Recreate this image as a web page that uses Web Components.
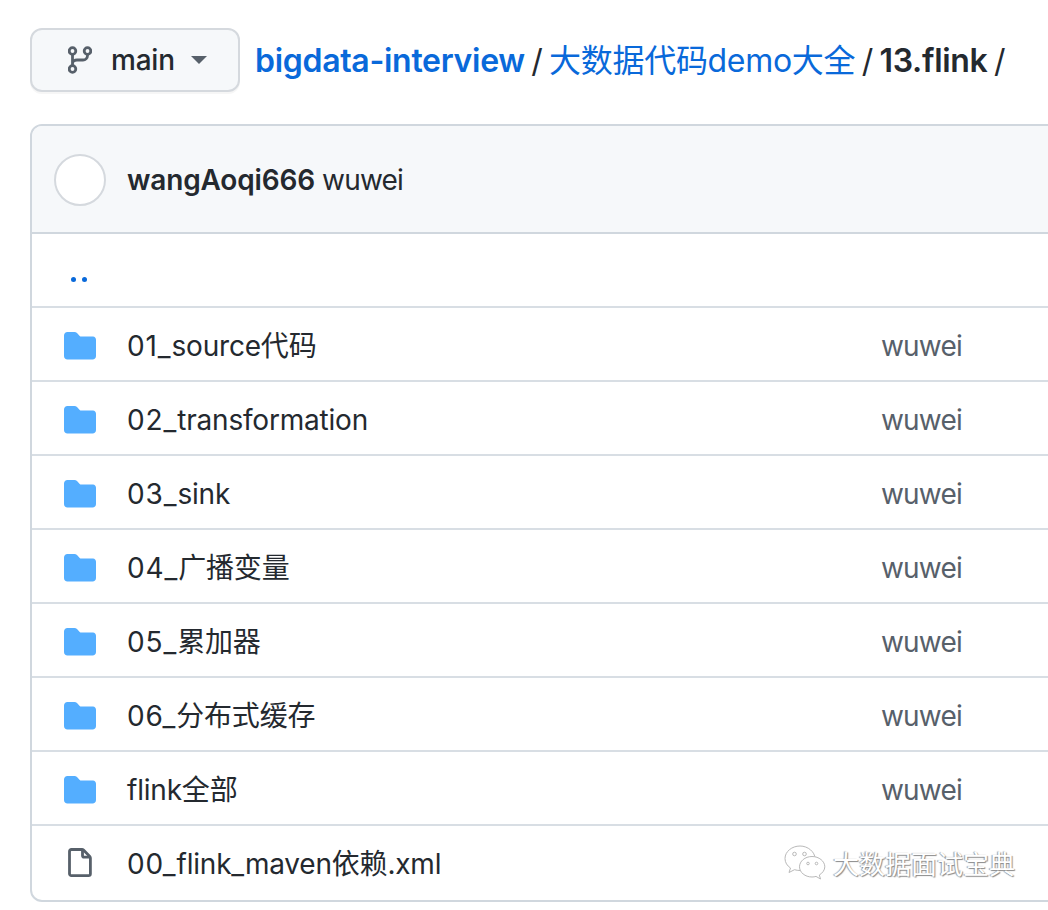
<!DOCTYPE html>
<html>
<head>
<meta charset="utf-8">
<style>
  html, body { margin: 0; padding: 0; background: #fff; overflow: hidden; height: 910px; }
  body { font-family: Inter, "Noto Sans CJK SC", sans-serif; color: #24292f; }
</style>
</head>
<body>
<repo-page>
  <repo-nav slot="nav"></repo-nav>
  <file-box slot="box">
    <commit-head user="wangAoqi666" message="wuwei"></commit-head>
    <file-row type="up" name=".."></file-row>
    <file-row type="dir" name="01_source代码" author="wuwei"></file-row>
    <file-row type="dir" name="02_transformation" author="wuwei"></file-row>
    <file-row type="dir" name="03_sink" author="wuwei"></file-row>
    <file-row type="dir" name="04_广播变量" author="wuwei"></file-row>
    <file-row type="dir" name="05_累加器" author="wuwei"></file-row>
    <file-row type="dir" name="06_分布式缓存" author="wuwei"></file-row>
    <file-row type="dir" name="flink全部" author="wuwei"></file-row>
    <file-row type="file" name="00_flink_maven依赖.xml"></file-row>
  </file-box>
  <water-mark slot="mark">大数据面试宝典</water-mark>
</repo-page>

<script>
const fontStack = 'Inter, "Noto Sans CJK SC", sans-serif';

const icons = {
  branch: `<svg width="24" height="28" viewBox="0 0 24 28" fill="none" stroke="#57606a" stroke-width="2.8">
    <circle cx="4.500" cy="5" r="3.300"/><circle cx="19.500" cy="5" r="3.300"/><circle cx="4.500" cy="23" r="3.300"/>
    <path d="M4.500 8.300v11.400M19.500 8.300v1.200c0 2.800-2.100 4.500-4.500 4.500H9c-2.500 0-4.500 1.500-4.500 3.500"/></svg>`,
  dir: `<svg width="32" height="32" viewBox="0 0 32 32"><path fill="#54aeff" d="M0 5.500C0 3.600 1.500 2 3.400 2h7c1 0 1.900.4 2.600 1.100l2.700 2.900c.4.4.9.6 1.400.6h11.900C30.700 6.600 32 8 32 9.800V26c0 2-1.500 3.500-3.400 3.500H3.400C1.500 29.500 0 28 0 26z"/></svg>`,
  file: `<svg width="32" height="32" viewBox="0 0 32 32" fill="none" stroke="#57606a" stroke-width="2.800" stroke-linejoin="round">
    <path d="M5.500 3.400c0-1 .8-1.900 1.900-1.900h10.600c.6 0 1.100.2 1.500.6l6.300 6.300c.4.4.6.9.6 1.500v15.800c0 1.100-.8 1.900-1.900 1.900H7.400c-1.100 0-1.900-.8-1.900-1.900z"/>
    <path d="M18.500 2v5.500c0 1 .7 1.700 1.700 1.700H26"/></svg>`,
  wechat: `<svg width="42" height="36" viewBox="0 0 42 36" fill="#fff" stroke="#b9b9b9" stroke-width="1">
    <path d="M16 1C8 1 1 6.500 1 13.500c0 4 2.200 7.300 5.500 9.500L5 27.500l5.500-2.800c1.800.5 3.600.8 5.500.8 8 0 15-5.500 15-12S24 1 16 1z"/>
    <path d="M28 11.500c-7 0-12.500 4.700-12.500 10.300S21 32 28 32c1.400 0 2.800-.2 4-.6l4.500 2.600-1.200-4c3.300-2 5.500-5 5.500-8.200 0-5.600-5.800-10.300-12.800-10.300z"/>
    <circle cx="10.500" cy="9" r="1.800" fill="none"/><circle cx="20.500" cy="9" r="1.800" fill="none"/>
    <circle cx="24" cy="18.500" r="1.300" fill="none"/><circle cx="32.500" cy="18.500" r="1.300" fill="none"/></svg>`
};

class RepoPage extends HTMLElement {
  constructor() {
    super();
    this.root = this.attachShadow({ mode: 'open' });
    this.root.innerHTML = `
    <style>
      :host { display: block; position: relative; width: 1048px; height: 910px; overflow: hidden; padding: 28px 0 0 30px; box-sizing: border-box; }
      .mark { position: absolute; left: 784px; top: 845px; }
    </style>
    <slot name="nav"></slot>
    <slot name="box"></slot>
    <div class="mark"><slot name="mark"></slot></div>
    `;
  }
}

class RepoNav extends HTMLElement {
  constructor() {
    super();
    this.root = this.attachShadow({ mode: 'open' });
    this.root.innerHTML = `
    <style>
      :host { display: flex; align-items: center; height: 64px; font-family: ${fontStack}; }
      .btn {
        box-sizing: border-box; width: 210px; height: 64px; margin-right: 15px;
        display: flex; align-items: center; padding-left: 36px;
        background: #f6f8fa; border: 2px solid #d5d9de; border-radius: 12px;
        font-size: 28px; font-weight: 500; color: #24292f; letter-spacing: -0.2px;
        box-shadow: 0 2px 0 rgba(27,31,36,.04);
      }
      .btn svg { margin-right: 19px; flex: none; }
      .caret { width: 0; height: 0; margin-left: 16px; border: 8px solid transparent; border-top-color: #57606a; border-bottom: 0; }
      .crumbs { font-size: 32px; line-height: 48px; white-space: nowrap; color: #24292f; padding-top: 2px; letter-spacing: -0.3px; word-spacing: -2.200px; }
      a { color: #0969da; text-decoration: none; }
      .repo { font-weight: 600; }
      .cur { font-weight: 600; }
    </style>
    <div class="btn">${icons.branch}<span>main</span><span class="caret"></span></div>
    <div class="crumbs"><a class="repo">bigdata-interview</a> / <a>大数据代码demo大全</a> / <span class="cur">13.flink</span> /</div>
    `;
  }
}

class FileBox extends HTMLElement {
  constructor() {
    super();
    this.root = this.attachShadow({ mode: 'open' });
    this.root.innerHTML = `
    <style>
      :host {
        display: block; box-sizing: border-box; width: 1080px; height: 778px; margin-top: 32px;
        border: 2px solid #d0d7de; border-radius: 12px; overflow: hidden; background: #fff;
      }
    </style>
    <slot></slot>
    `;
  }
}

class CommitHead extends HTMLElement {
  constructor() {
    super();
    this.root = this.attachShadow({ mode: 'open' });
    this.root.innerHTML = `
    <style>
      :host {
        display: flex; align-items: center; box-sizing: border-box; height: 108px; padding: 2px 0 0 22px;
        background: #f6f8fa; border-bottom: 2px solid #d0d7de;
        font-family: ${fontStack}; font-size: 28px; line-height: 36px; color: #24292f;
      }
      .avatar { box-sizing: border-box; width: 52px; height: 52px; border-radius: 50%; background: #fff; border: 2px solid #d5d9de; margin-right: 21px; flex: none; }
      b { font-weight: 600; margin-right: 7px; letter-spacing: -0.15px; }
      .msg { letter-spacing: -0.8px; }
    </style>
    <span class="avatar"></span><b>${this.getAttribute('user')}</b><span class="msg">${this.getAttribute('message')}</span>
    `;
  }
}

class FileRow extends HTMLElement {
  constructor() {
    super();
    this.root = this.attachShadow({ mode: 'open' });
    const type = this.getAttribute('type');
    const author = this.getAttribute('author') || '';
    const up = type === 'up';
    // the 01_ prefix runs a bit wider than the rest of the name
    const name = (this.getAttribute('name') || '').replace(/^\d\d_/, '<span class="pre">$&</span>');
    this.root.innerHTML = `
    <style>
      :host {
        display: flex; align-items: center; box-sizing: border-box; height: 74px; padding-top: 4px;
        border-bottom: 2px solid #d8dee4;
        font-family: ${fontStack}; font-size: 28px; line-height: 36px; color: #24292f;
      }
      :host(:last-child) { border-bottom: 0; padding-top: 2px; }
      .icon { width: 32px; height: 32px; margin: 0 31px 0 32px; flex: none; display: flex; }
      .up { display: flex; gap: 5.6px; margin: 14px 0 0 39px; }
      .up i { width: 5px; height: 5px; border-radius: 50%; background: #0969da; }
      .name { width: 754px; flex: none; white-space: nowrap; letter-spacing: -0.2px; }
      .pre { letter-spacing: 0.9px; }
      .author { color: #57606a; letter-spacing: -0.8px; }
    </style>
    ${up ? '<div class="up" title=".."><i></i><i></i></div>' : `
    <span class="icon">${icons[type]}</span>
    <span class="name">${name}</span>
    <span class="author">${author}</span>`}
    `;
  }
}

class WaterMark extends HTMLElement {
  constructor() {
    super();
    this.root = this.attachShadow({ mode: 'open' });
    this.root.innerHTML = `
    <style>
      :host {
        display: flex; align-items: center; gap: 7px;
        font-family: "Noto Sans CJK SC", sans-serif; font-size: 26px; line-height: 36px; color: #fff;
        text-shadow: 1px 1px 1px #8a8a8a, -1px 0 1px #9a9a9a;
      }
    </style>
    ${icons.wechat}<slot></slot>
    `;
  }
}

customElements.define('repo-page', RepoPage);
customElements.define('repo-nav', RepoNav);
customElements.define('file-box', FileBox);
customElements.define('commit-head', CommitHead);
customElements.define('file-row', FileRow);
customElements.define('water-mark', WaterMark);
</script>
</body>
</html>
